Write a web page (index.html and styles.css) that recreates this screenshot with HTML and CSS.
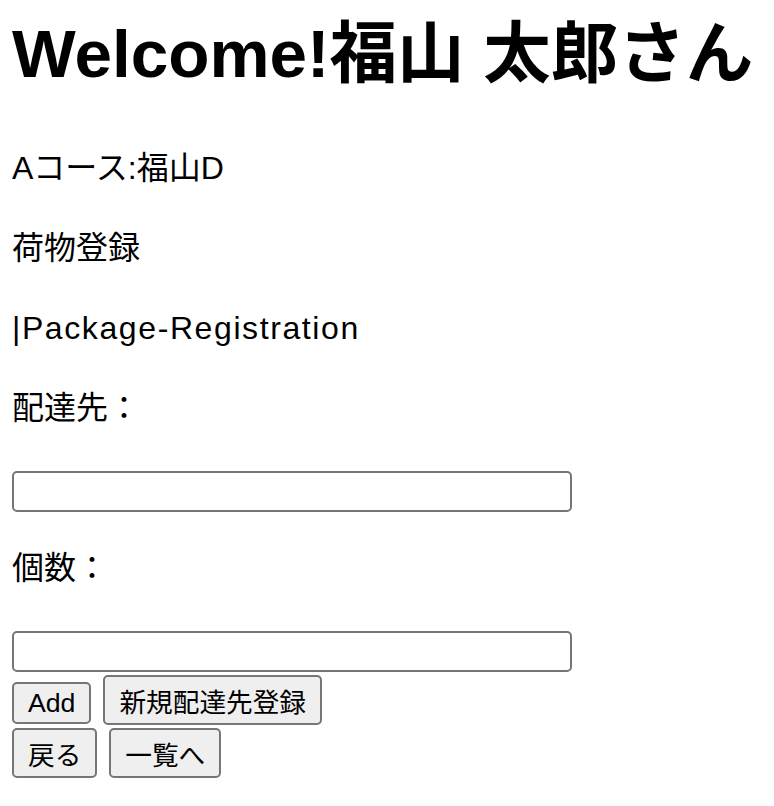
FILE: index.html
```html
<!DOCTYPE html>
<html lang="ja">
<head>
<meta charset="utf-8">
<title>荷物登録</title>
<link rel="stylesheet" href="styles.css">
</head>
<body>
<div class="page">
  <h1 class="title">Welcome!福山 太郎さん</h1>
  <p class="text">Aコース:福山D</p>
  <p class="text">荷物登録</p>
  <p class="text latin">|Package-Registration</p>
  <p class="text">配達先：</p>
  <input class="field" type="text">
  <p class="text">個数：</p>
  <input class="field" type="text">
  <div class="row">
    <button class="btn" type="button">Add</button>
    <button class="btn" type="button">新規配達先登録</button>
  </div>
  <div class="row">
    <button class="btn" type="button">戻る</button>
    <button class="btn" type="button">一覧へ</button>
  </div>
</div>
</body>
</html>
```

FILE: styles.css
```css
html, body {
  margin: 0;
  padding: 0;
  background: #ffffff;
}

body {
  font-family: "Liberation Sans", "Noto Sans CJK JP", sans-serif;
  color: #000000;
}

.page {
  padding: 0 12px;
  display: flow-root;
}

.title {
  font-size: 67.5px;
  font-weight: 700;
  line-height: 80px;
  margin: 14px 0 50px;
  white-space: nowrap;
}

.text {
  font-size: 32px;
  line-height: 48px;
  margin: 32px 0;
}

.latin {
  letter-spacing: 1.6px;
}

.field {
  display: block;
  box-sizing: border-box;
  width: 560px;
  height: 41px;
  margin: 39px 0 0;
  padding: 0 6px;
  border: 2px solid #767676;
  border-radius: 5px;
  background: #ffffff;
  font-size: 26px;
  font-family: inherit;
}

.row {
  display: flex;
  align-items: baseline;
  gap: 12px;
  margin-top: 3px;
}

.btn {
  font-family: "Liberation Sans", "Noto Sans CJK JP", sans-serif;
  font-size: 26.67px;
  line-height: normal;
  color: #000000;
  background: #efefef;
  border: 2px solid #767676;
  border-radius: 5px;
  padding: 3.5px 14px;
  margin: 0;
}
```
